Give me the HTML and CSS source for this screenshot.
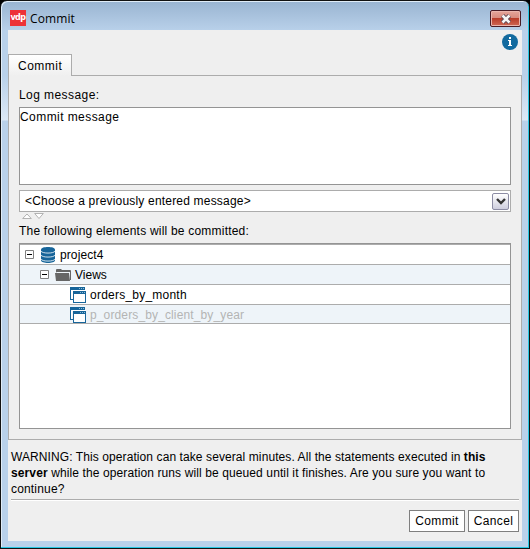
FILE: index.html
```html
<!DOCTYPE html>
<html lang="en">
<head>
<meta charset="utf-8">
<title>Commit</title>
<link rel="stylesheet" href="styles.css">
</head>
<body>
<svg class="defs" width="0" height="0">
  <symbol id="view" viewBox="0 0 16 16">
    <path fill="#17659a" d="M0 0h15v3H1v9h2v1H0z"/>
    <path fill="#fff" d="M1 4h1v8H1z"/>
    <path fill="#8dbbd7" d="M9 1h1v1H9zM11 1h1v1h-1zM13 1h1v1h-1z"/>
    <path fill="#fff" d="M2 3h14v1H2z"/>
    <path fill="#17659a" d="M3 4h13v12H3z"/>
    <path fill="#fff" d="M4 7h11v8H4z"/>
    <path fill="#8dbbd7" d="M10 5h1v1h-1zM12 5h1v1h-1zM14 5h1v1h-1z"/>
  </symbol>
</svg>
<div class="window">
  <header class="titlebar">
    <span class="logo">vdp</span>
    <span class="title">Commit</span>
    <button class="close" aria-label="Close">
      <svg width="12" height="10" viewBox="0 0 12 10"><path d="M2.5 1.5l7 7M9.5 1.5l-7 7" stroke="#5b4855" stroke-width="4.4"/><path d="M2.5 1.5l7 7M9.5 1.5l-7 7" stroke="#f5f5f5" stroke-width="2.6"/></svg>
    </button>
  </header>
  <main class="content">
    <div class="toolbar">
      <svg width="16" height="16" viewBox="0 0 16 16"><circle cx="8" cy="8" r="8" fill="#126a9f"/><path fill="#fff" d="M7 3h2v2H7zM6 6h3v5h1v1H6v-1h1V7H6z"/></svg>
    </div>
    <div class="tabs"><div class="tab"><span class="t-tab">Commit</span></div></div>
    <section class="panel">
      <div class="label log"><span class="t-log">Log message:</span></div>
      <div class="message"><span class="t-msg">Commit message</span></div>
      <div class="combo"><span class="t-choose">&lt;Choose a previously entered message&gt;</span>
        <span class="drop"><svg width="10" height="7" viewBox="0 0 10 7"><path d="M1 1l4 4 4-4" fill="none" stroke="#333" stroke-width="2.4"/></svg></span>
      </div>
      <div class="splitter"><svg width="22" height="7" viewBox="0 0 22 7"><path d="M.7 5.5h8.6L5 1zM12.7.5h8.6L17 5.5z" fill="#fff" stroke="#aaa" stroke-width=".9"/></svg></div>
      <div class="label elements"><span class="t-elements">The following elements will be committed:</span></div>
      <div class="tree">
        <div class="row root">
          <svg class="toggle" width="9" height="9" viewBox="0 0 9 9"><path d="M.5.5h8v8h-8z" fill="#fff" stroke="#808080"/><path d="M2 4h5v1H2z"/></svg>
          <svg class="db" width="14" height="16" viewBox="0 0 14 16"><path fill="#17659a" d="M0 2.5C0-.8 14-.8 14 2.5v11c0 3.3-14 3.3-14 0z"/><path fill="none" stroke="#fff" stroke-width=".8" d="M0 4.2c1.5 2.5 12.5 2.5 14 0M0 8.2c1.5 2.5 12.5 2.5 14 0M0 12.2c1.5 2.5 12.5 2.5 14 0"/></svg>
          <span class="t-project">project4</span>
        </div>
        <div class="row alt views">
          <svg class="toggle" width="9" height="9" viewBox="0 0 9 9"><path d="M.5.5h8v8h-8z" fill="#fff" stroke="#808080"/><path d="M2 4h5v1H2z"/></svg>
          <svg class="folder" width="16" height="12" viewBox="0 0 16 12"><path fill="#666" d="M1 3.5V1Q1 0 2 0h4l1 1h8q1 0 1 1v9h-1V3H2z"/><path fill="#666" d="M0 4h14l1 8H1z"/></svg>
          <span class="t-views">Views</span>
        </div>
        <div class="row leaf"><svg class="view" width="16" height="16"><use href="#view"/></svg><span class="t-orders">orders_by_month</span></div>
        <div class="row alt leaf last"><svg class="view" width="16" height="16"><use href="#view"/></svg><span class="t-client">p_orders_by_client_by_year</span></div>
      </div>
    </section>
    <p class="warning"><span class="w1">WARNING: This operation can take several minutes. All the statements executed in <b>this</b></span><br><span class="w2"><b>server</b> while the operation runs will be queued until it finishes. Are you sure you want to</span><br><span class="w3">continue?</span></p>
    <footer class="actions"><button class="btn commit">Commit</button><button class="btn cancel">Cancel</button></footer>
  </main>
</div>
</body>
</html>
```
FILE: styles.css
```css
* { box-sizing: border-box; }
body { margin: 0; background: #000; font: 12px/16px "Liberation Sans", Arial, sans-serif; color: #000; overflow: hidden; }
button { font: inherit; color: inherit; padding: 0; margin: 0; }
svg { display: block; flex: none; }
.defs { position: absolute; }
span { white-space: nowrap; }
.window { width: 530px; height: 549px; padding: 1px 6px 7px 7px; border: 1px solid #111; border-radius: 7px 7px 0 0; background: linear-gradient(#99b4d1, #b9d1ea 30px, #b9d1ea 75px, #dce8f5 119px, #b9d1ea 120px); box-shadow: inset -1px -1px #28c7e3, inset 1px 1px #e0ecf7; }
.titlebar { height: 28px; display: flex; align-items: flex-start; padding: 8px 2px 0; }
.logo { width: 16px; height: 16px; background: #ed3237; color: #fff; font: bold 8px/15px "DejaVu Sans", sans-serif; letter-spacing: -.5px; text-align: center; }
.title { margin-left: 4px; font: 12px/18px "Open Sans", sans-serif; letter-spacing: .1px; }
.close { margin-left: auto; width: 31px; height: 17px; border: 1px solid #481c25; border-radius: 2px; background: linear-gradient(#e5a69b, #d88b7e 47%, #b93d2a 50%, #cf6955); box-shadow: inset 0 0 0 1px #eab5ad; display: grid; place-items: center; }
.content { width: 514px; height: 511px; background: #efefef; display: flex; flex-direction: column; }
.toolbar { height: 24px; display: flex; justify-content: flex-end; padding: 4px 4px 0; }
.tabs { height: 21px; display: flex; }
.tab { width: 64px; height: 22px; border: 1px solid #acacac; border-bottom: 0; background: linear-gradient(#fff, #efefef); padding: 3px 9px; z-index: 1; }
.panel { height: 365px; border: 1px solid #acacac; padding: 11px 10px 0; }
.label { height: 16px; }
.message { margin-top: 4px; height: 78px; border: 1px solid #949494; background: #fff; padding: 1px 0; }
.combo { margin-top: 5px; height: 22px; border: 1px solid #acacac; background: #fff; padding: 0 1px 0 5px; display: flex; align-items: center; justify-content: space-between; }
.drop { width: 17px; height: 17px; border: 1px solid #8c8ca4; border-radius: 2px; background: linear-gradient(#fff, #cecede); display: grid; place-items: center; }
.splitter { height: 10px; padding: 1px 3px; }
.elements { margin-top: 1px; }
.tree { margin-top: 4px; height: 186px; border: 1px solid #949494; background: #fff; }
.row { height: 20px; border-bottom: 1px solid #acacac; display: flex; align-items: center; }
.root { height: 21px; border-top: 1px solid #acacac; padding-left: 5px; }
.views { padding-left: 20px; }
.leaf { padding: 0 0 0 50px; }
.last { height: 19px; padding-top: 1px; color: #b4b4b4; }
.alt { background: #eef4f9; }
.db { margin: 0 5px 0 7px; }
.folder { margin: 0 4px 0 6px; }
.view { margin-right: 4px; }
.warning { margin: 9px 3px 0; height: 51px; border-bottom: 1px solid #acacac; box-shadow: 0 1px #fff; }
.actions { margin: 10px 3px 0; display: flex; justify-content: flex-end; gap: 3px; }
.btn { height: 22px; border: 1px solid #7f7f7f; background: #fff; letter-spacing: .38px; }
.commit { width: 56px; }
.cancel { width: 51px; }
.t-tab { letter-spacing: .5px; }
.t-log, .t-msg { letter-spacing: .43px; }
.t-choose { letter-spacing: .19px; }
.t-elements { letter-spacing: .21px; }
.t-project { letter-spacing: .1px; }
.t-orders { letter-spacing: .23px; }
.t-client { letter-spacing: .13px; }
.w1 { letter-spacing: .09px; }
.w2 { letter-spacing: .11px; }
.w3 { letter-spacing: .17px; }
```
